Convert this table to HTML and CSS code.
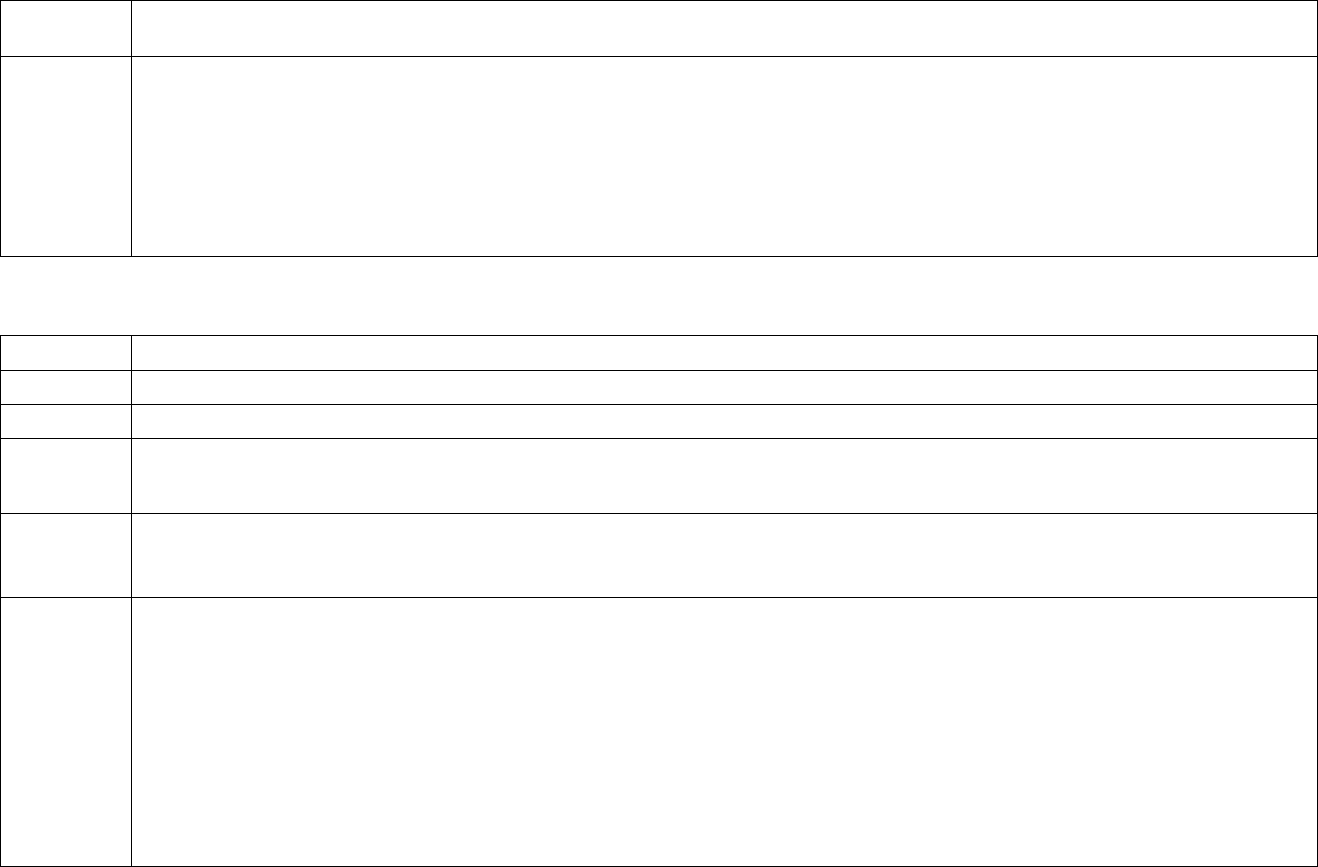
FILE: index.html
```html
<!DOCTYPE html>
<html>
<head>
<meta charset="utf-8">
<link rel="stylesheet" href="styles.css">
</head>
<body>
<table class="grid grid-top">
  <tr class="r56"><td class="label"></td><td class="value"></td></tr>
  <tr class="r200"><td class="label"></td><td class="value"></td></tr>
</table>
<table class="grid grid-bottom">
  <tr class="r35"><td class="label"></td><td class="value"></td></tr>
  <tr class="r34"><td class="label"></td><td class="value"></td></tr>
  <tr class="r34"><td class="label"></td><td class="value"></td></tr>
  <tr class="r75"><td class="label"></td><td class="value"></td></tr>
  <tr class="r84"><td class="label"></td><td class="value"></td></tr>
  <tr class="r269"><td class="label"></td><td class="value"></td></tr>
</table>
</body>
</html>
```
FILE: styles.css
```css
html, body {
  margin: 0;
  padding: 0;
  background: #ffffff;
  font-family: "Liberation Sans", Arial, sans-serif;
}
.grid {
  border-collapse: separate;
  border-spacing: 0;
  border-top: 1px solid #000;
  border-left: 1px solid #000;
  width: 1318px;
  table-layout: fixed;
}
.grid td {
  box-sizing: border-box;
  padding: 0;
  border-right: 1px solid #000;
  border-bottom: 1px solid #000;
}
.grid .label { width: 131px; }
.grid .value { width: 1186px; }
.grid-bottom { margin-top: 78px; }
.r56 td { height: 56px; }
.r200 td { height: 200px; }
.r35 td { height: 35px; }
.r34 td { height: 34px; }
.r75 td { height: 75px; }
.r84 td { height: 84px; }
.r269 td { height: 269px; }
```
